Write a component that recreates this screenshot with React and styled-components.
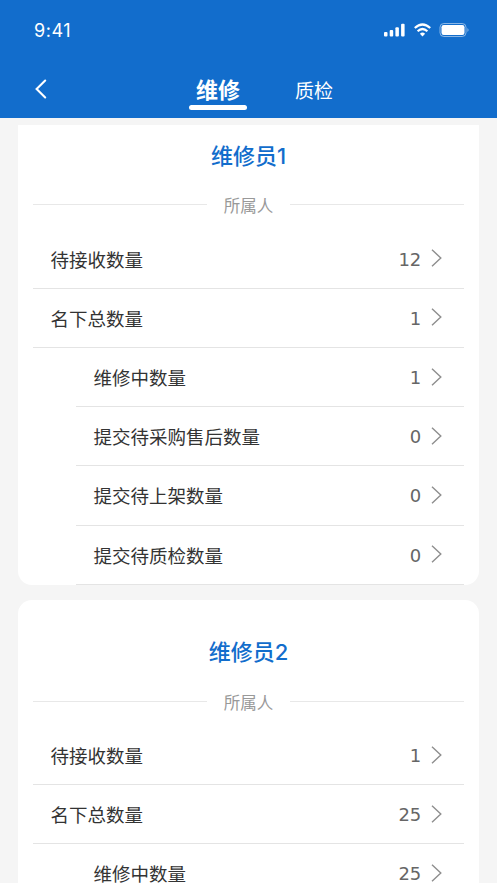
import React from "react";
import styled, { createGlobalStyle } from "styled-components";

const Global = createGlobalStyle`
  *{box-sizing:border-box}
  body{margin:0;background:#f5f5f5;overflow:hidden;font-family:"Noto Sans","Noto Sans CJK SC",sans-serif;color:#333}
`;
const Page = styled.main`width:497px;height:883px;overflow:hidden;display:flex;flex-direction:column;`;
const Header = styled.header`height:118px;flex:none;background:#126dcc;color:#fff;`;
const StatusBar = styled.div`height:60px;padding:0 28px 0 34px;display:flex;align-items:center;justify-content:space-between;`;
const Time = styled.span`font-family:Inter,sans-serif;font-size:18px;line-height:20px;letter-spacing:.55px;padding-top:1px;`;
const Indicators = styled.div`display:flex;align-items:center;gap:8.5px;svg{display:block}`;
const Nav = styled.nav`height:58px;display:flex;align-items:center;padding-left:34px;`;
const Back = styled.button`border:0;background:none;padding:0;width:155px;color:#fff;display:flex;svg{display:block}`;
const Tab = styled.button`border:0;padding:0;background:none;color:#fff;font-family:"Noto Sans CJK SC",sans-serif;font-size:${p => p.$active ? 22 : 19}px;font-weight:${p => p.$active ? 700 : 400};width:${p => p.$active ? 58 : 38}px;margin-right:48px;height:42px;display:flex;flex-direction:column;line-height:37px;padding-top:${p => p.$active ? 2 : 3}px;align-items:center;white-space:nowrap;
  &::after{content:"";display:${p => p.$active ? "block" : "none"};width:58px;height:5px;flex:none;margin-top:-2px;border-radius:3px;background:#fff;}`;
const Body = styled.div`padding:7px 18px 0;display:flex;flex-direction:column;gap:15px;`;
const Card = styled.section`height:${p => p.$first ? 460 : 497}px;flex:none;background:#fff;border-radius:${p => p.$first ? "0 0 14px 14px" : "14px"};padding:${p => p.$first ? 0 : 21.4}px 15px 0;overflow:hidden;`;
const Name = styled.h2`margin:0;height:63.2px;line-height:62px;text-align:center;color:#126dcc;font-family:Inter,"Noto Sans CJK SC",sans-serif;font-size:22px;font-weight:500;`;
const Owner = styled.div`height:41.4px;display:flex;align-items:flex-start;gap:17px;color:#999;font:16.5px/34px "Noto Sans CJK SC",sans-serif;&::before,&::after{content:"";height:1px;background:#e8e8e8;flex:1;margin-top:16px;}`;
const Row = styled.div`height:59.2px;margin-left:${p => p.$nested ? 43 : 0}px;padding:0 22px 0 17.5px;border-bottom:1px solid #e4e4e4;display:flex;align-items:center;font:18.5px/28px "Noto Sans CJK SC",sans-serif;svg{margin-bottom:1px}`;
const Count = styled.span`margin-left:auto;margin-right:10px;padding-top:2px;color:#666;font:18px/24px "DejaVu Sans",sans-serif;letter-spacing:-.2px;`;
const Chevron = () => <svg width="11" height="18" viewBox="0 0 11 18" fill="none" stroke="#8e8e8e" strokeWidth="1.4"><path d="m1 .8 8.8 8.2L1 17.2"/></svg>;

const people = [
  { name: "维修员1", counts: [["待接收数量",12],["名下总数量",1],["维修中数量",1,true],["提交待采购售后数量",0,true],["提交待上架数量",0,true],["提交待质检数量",0,true]] },
  { name: "维修员2", counts: [["待接收数量",1],["名下总数量",25],["维修中数量",25,true]] },
];
export default function App(){return <><Global/><Page><Header><StatusBar><Time>9:41</Time><Indicators>
<svg width="21" height="14" fill="#fff"><rect y="9" width="3.5" height="4.5" rx="1"/><rect x="5.7" y="7" width="3.5" height="6.5" rx="1"/><rect x="11.4" y="4.2" width="3.5" height="9.3" rx="1"/><rect x="17.1" y=".8" width="3.5" height="12.7" rx="1"/></svg>
<svg width="17" height="14" viewBox="0 0 17 14" fill="none" stroke="#fff" strokeWidth="2.2"><path d="M.8 5q7.7-7 15.4 0M3.6 8.2q4.9-4.4 9.8 0"/><path d="M5.9 10.7q2.6-2.2 5.2 0L8.5 13.4z" fill="#fff" stroke="none"/></svg>
<svg width="30" height="14" viewBox="-.5 0 30 14"><rect x=".5" y=".5" width="26" height="13" rx="3.8" fill="none" stroke="#fff" opacity=".5"/><rect x="2" y="2" width="23" height="10" rx="2.2" fill="#fff"/><path d="M28 5q2 2 0 4z" fill="#fff" opacity=".6"/></svg>
</Indicators></StatusBar><Nav><Back aria-label="返回"><svg width="14" height="20" fill="none" stroke="#fff" strokeWidth="2.1" strokeLinecap="round"><path d="m11.2 1.5-8.6 8.5 8.6 8.5"/></svg></Back><Tab $active>维修</Tab><Tab>质检</Tab></Nav></Header><Body>{people.map((p,i)=><Card key={p.name} $first={!i}><Name>{p.name}</Name><Owner>所属人</Owner>{p.counts.map(([label,count,nested])=><Row key={label} $nested={nested}><span>{label}</span><Count>{count}</Count><Chevron/></Row>)}</Card>)}</Body></Page></>}
